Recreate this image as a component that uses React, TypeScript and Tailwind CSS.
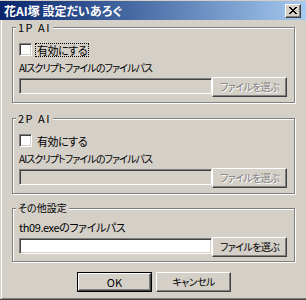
import React from "react";

const font = "font-['Noto_Sans_CJK_JP','Noto_Sans',sans-serif] [font-feature-settings:'palt']";

const raised =
  "border border-t-white border-l-white border-r-[#404040] border-b-[#404040] shadow-[inset_-1px_-1px_0_#808080]";
const sunken =
  "border border-t-[#808080] border-l-[#808080] border-r-white border-b-white shadow-[inset_1px_1px_0_#404040,inset_-1px_-1px_0_#d4d0c8]";

function CloseGlyph() {
  const rows = ["11000011", "01100110", "00111100", "00011000", "00111100", "01100110", "11000011"];
  return (
    <svg width="8" height="7" viewBox="0 0 8 7" shapeRendering="crispEdges">
      {rows.map((r, y) =>
        r.split("").map((c, x) => (c === "1" ? <rect key={`${x}-${y}`} x={x} y={y} width="1" height="1" fill="#000" /> : null))
      )}
    </svg>
  );
}

function Button({ label, disabled }: { label: string; disabled?: boolean }) {
  return (
    <div className={`${raised} w-[75px] h-[20px] flex items-center justify-center text-[10px] tracking-[-0.6px] leading-none ${
      disabled ? "text-[#808080] [text-shadow:1px_1px_0_#fff]" : "text-black"
    }`}>
      {label}
    </div>
  );
}

function Group({ label, className, children, wide }: { label: string; className: string; children: React.ReactNode; wide?: boolean }) {
  return (
    <div className={`relative w-[283px] border border-[#808080] shadow-[1px_1px_0_#fff,inset_1px_1px_0_#fff] pl-[6px] ${className}`}>
      <span className={`absolute -top-[8px] left-[3px] bg-[#d4d0c8] px-[2px] leading-[14px] ${
        wide ? "text-[11px] tracking-[1.5px]" : "text-[10px]"
      }`}>{label}</span>
      {children}
    </div>
  );
}

function PathRow({ disabled }: { disabled?: boolean }) {
  return (
    <div className="flex items-start mt-[3px]">
      <div className={`${sunken} mt-[1px] w-[193px] h-[16px] ${disabled ? "bg-[#d4d0c8]" : "bg-white"}`} />
      <Button label="ファイルを選ぶ" disabled={disabled} />
    </div>
  );
}

function Check({ focused }: { focused?: boolean }) {
  return (
    <div className="flex items-center h-[13px]">
      <div className={`${sunken} w-[13px] h-[13px] bg-white`} />
      <span className={`ml-[3px] px-[1px] text-[11px] tracking-[-0.5px] leading-[12px] border border-dotted ${focused ? "border-black" : "border-transparent"}`}>
        有効にする
      </span>
    </div>
  );
}

export default function App() {
  return (
    <div className={`${font} w-[306px] h-[300px] bg-[#d4d0c8] flex flex-col overflow-hidden border-b border-[#404040] text-black`}>
      {/* Title bar */}
      <div className="mt-[1px] h-[19px] bg-linear-to-r from-[#0a246a] to-[#a6caf0] flex items-center pl-[4px] pr-[5px]">
        <span className="text-white text-[12px] font-bold leading-none flex-1">花AI塚 設定だいあろぐ</span>
        <div className={`${raised} w-[16px] h-[14px] bg-[#d4d0c8] flex items-center justify-center`}>
          <CloseGlyph />
        </div>
      </div>

      {/* Body */}
      <div className="flex-1 ml-[1px] border-l border-white border-b border-b-[#808080] pl-[10px]">
        <Group label="1P AI" wide className="mt-[7px] h-[76px] pt-[15px]">
          <Check focused />
          <p className="mt-[5px] text-[10px] tracking-[-0.9px] leading-[13px]">AIスクリプトファイルのファイルパス</p>
          <PathRow disabled />
        </Group>

        <Group label="2P AI" wide className="mt-[15px] h-[76px] pt-[15px]">
          <Check />
          <p className="mt-[5px] text-[10px] tracking-[-0.9px] leading-[13px]">AIスクリプトファイルのファイルパス</p>
          <PathRow disabled />
        </Group>

        <Group label="その他設定" className="mt-[14px] h-[54px] pt-[12px]">
          <p className="text-[11px] tracking-[-0.4px] leading-[13px]">th09.exeのファイルパス</p>
          <PathRow />
        </Group>

        <div className="flex gap-[4px] mt-[10px] pl-[65px]">
          <div className="border border-black">
            <div className={`${raised} w-[73px] h-[18px] flex items-center justify-center text-[11px] leading-none`}>OK</div>
          </div>
          <Button label="キャンセル" />
        </div>
      </div>
    </div>
  );
}
